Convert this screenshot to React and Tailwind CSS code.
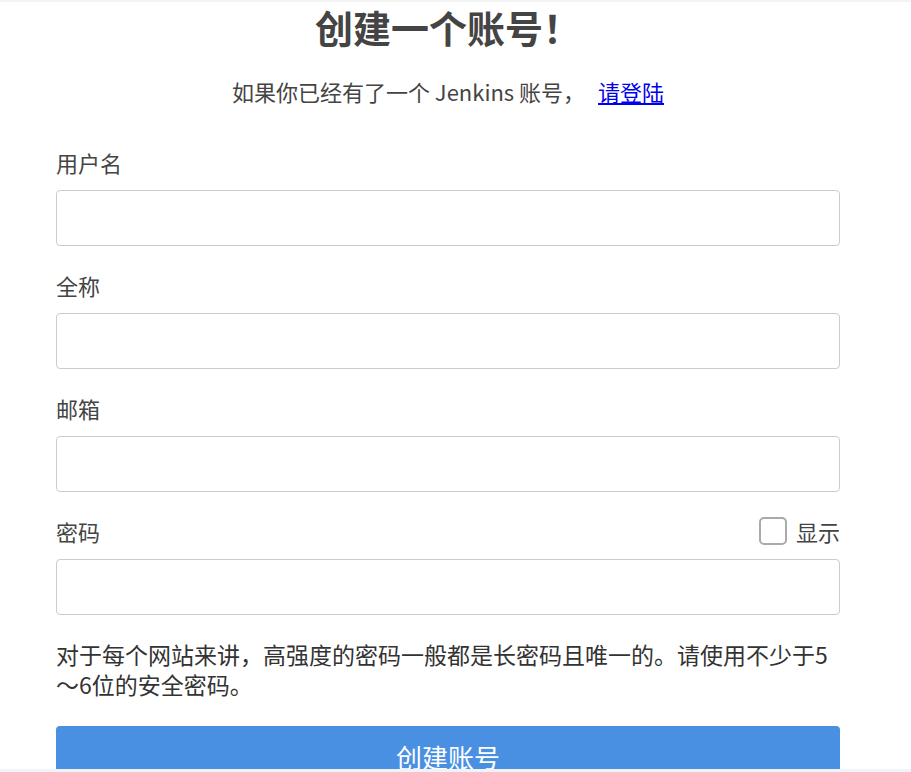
import React from "react";

const font = { fontFamily: '"Noto Sans CJK SC", "Liberation Sans", sans-serif' };

function Field({ label, right }) {
  return (
    <div className="mb-[24px]">
      <div className="flex h-[30px] items-center justify-between">
        <span className="text-[22px] text-[#444]">{label}</span>
        {right}
      </div>
      <input
        type="text"
        className="mt-[13px] block h-[56px] w-full rounded-[4px] border border-[#ccc] bg-white px-3 outline-none"
      />
    </div>
  );
}

export default function App() {
  return (
    <div className="min-h-[772px] w-full border-t-2 border-[#f3f3f3] bg-white" style={font}>
      <div className="ml-[56px] w-[784px]">
        <h1 className="h-[50px] text-center text-[38px] font-bold leading-[50px] text-[#444]">
          创建一个账号！
        </h1>
        <p className="mt-[24px] h-[30px] text-center text-[22px] leading-[30px] text-[#444]">
          如果你已经有了一个 Jenkins 账号，{" "}
          <a href="#" className="ml-2 text-[#0000ee] underline">
            请登陆
          </a>
        </p>
        <div className="mt-[41px]">
          <Field label="用户名" />
          <Field label="全称" />
          <Field label="邮箱" />
          <Field
            label="密码"
            right={
              <label className="flex items-center gap-[9px]">
                <span className="block h-[28px] w-[28px] rounded-[5px] border-2 border-[#aaa] bg-white" />
                <span className="text-[22px] text-[#444]">显示</span>
              </label>
            }
          />
        </div>
        <p className="mt-[17px] text-[23px] leading-[30px] text-[#333]">
          对于每个网站来讲，高强度的密码一般都是长密码且唯一的。请使用不少于5～6位的安全密码。
        </p>
        <button className="mt-[27px] flex h-[60px] w-full items-center justify-center rounded-[4px] bg-[#4a90e2] text-[26px] text-white">
          创建账号
        </button>
      </div>
      <div className="fixed bottom-0 left-0 h-[3px] w-full bg-[#eef4fa]" />
    </div>
  );
}
